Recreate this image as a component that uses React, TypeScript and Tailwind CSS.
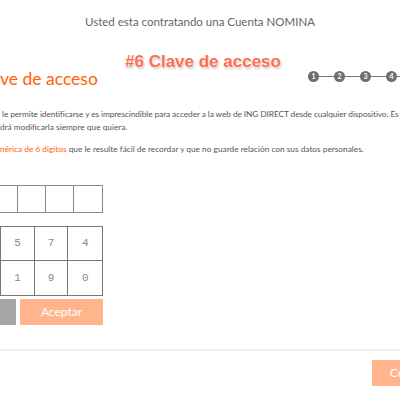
import React from "react";

const font = { fontFamily: "Lato, 'Open Sans', sans-serif" };

function Steps() {
  const steps = [1, 2, 3, 4];
  return (
    <div className="flex items-center">
      {steps.map((n, i) => (
        <div key={n} className="flex items-center">
          {i > 0 && <div className="h-px w-[15px] bg-[#777]" />}
          <div className="flex h-[11px] w-[11px] items-center justify-center rounded-full bg-[#6e6e70] text-[7px] font-bold leading-none text-white">
            {n}
          </div>
        </div>
      ))}
      <div className="h-px w-[3px] bg-[#777]" />
    </div>
  );
}

export default function App() {
  const keys = [
    ["", "", "5", "7", "4"],
    ["", "", "1", "9", "0"],
  ];

  return (
    <div
      className="relative h-[400px] w-[400px] overflow-hidden bg-white text-[#555]"
      style={font}
    >
      <div className="pt-[13px] text-center text-[11.5px] text-[#666]">
        Usted esta contratando una Cuenta NOMINA
      </div>

      <div className="mt-[40px] flex items-center justify-between whitespace-nowrap">
        <div className="text-[17.5px] leading-none text-[#ff6200]">ve de acceso</div>
        <div className="mt-[-6px]">
          <Steps />
        </div>
      </div>

      <div className="mt-[20px] whitespace-nowrap text-[8.3px] leading-[13px] text-[#555]">
        <p className="pl-[2px] tracking-[-0.08px]">
          le permite identificarse y es imprescindible para acceder a la web de ING DIRECT desde cualquier dispositivo. Es
        </p>
        <p>drá modificarla siempre que quiera.</p>
        <p className="mt-[9px]">
          <span className="text-[#ff6200]">nérica de 6 digitos</span> que le resulte fácil de recordar y que no guarde relación con sus datos personales.
        </p>
      </div>

      <div className="ml-[-67px] mt-[29px] w-[170px]">
        <div className="grid h-[28px] grid-cols-6 border border-[#8a8a8a]">
          {[0, 1, 2, 3, 4, 5].map((i) => (
            <div key={i} className={i < 5 ? "border-r border-[#8a8a8a]" : ""} />
          ))}
        </div>

        <div className="mt-[13px] border border-[#777]">
          {keys.map((row, r) => (
            <div
              key={r}
              className={`grid h-[34px] grid-cols-5 ${r === 0 ? "border-b border-[#777]" : ""}`}
            >
              {row.map((k, c) => (
                <div
                  key={c}
                  className={`flex items-center justify-center text-[11px] text-[#888] ${c < 4 ? "border-r border-[#777]" : ""}`}
                  style={{ fontFamily: "'Liberation Mono', monospace" }}
                >
                  {k}
                </div>
              ))}
            </div>
          ))}
        </div>

        <div className="mt-[3px] flex h-[26px] gap-[4px]">
          <div className="flex-1 bg-[#a6a6a6]" />
          <div className="flex flex-1 items-center justify-center bg-[#ffb48b] text-[12px] text-white">
            Aceptar
          </div>
        </div>
      </div>

      <div className="mt-[24px] h-[2px] w-full bg-[#efefef]" />

      <div className="mt-[9px] flex justify-end">
        <div className="mr-[-60px] flex h-[26px] w-[88px] items-center justify-center bg-[#ffb48b] text-[12px] text-white">
          Continuar
        </div>
      </div>

      <div
        className="absolute left-[125px] top-[49px] whitespace-nowrap text-[17px] font-bold text-[#ff6f4f]"
        style={{
          fontFamily: "'Liberation Sans', Arial, sans-serif",
          textShadow:
            "0 0 2px #fff, 1px 1px 1px #ddd, -1px -1px 1px #fff, 1px 2px 2px #ccc",
        }}
      >
        #6 Clave de acceso
      </div>
    </div>
  );
}
